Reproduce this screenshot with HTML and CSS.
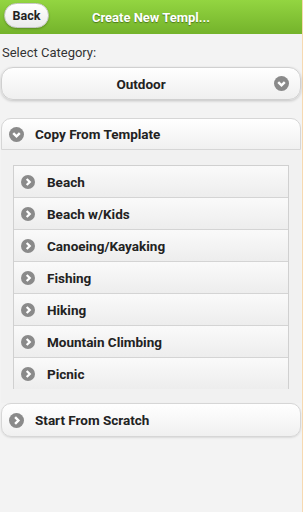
FILE: index.html
```html
<!DOCTYPE html>
<html>
<head>
  <link rel="stylesheet" href="styles.css">
</head>
<body>
  <div class="app">
    <div class="header">
      <button class="back-btn">Back</button>
      <h1>Create New Templ...</h1>
    </div>
    <div class="content">
      <label class="field-label">Select Category:</label>
      <div class="select-btn">
        <span>Outdoor</span>
        <svg class="icon icon-right" viewBox="0 0 16 16"><circle cx="8" cy="8" r="8" fill="#8a8a8a"/><path d="M4.5 6.5 L8 10 L11.5 6.5" stroke="#fff" stroke-width="2.6" fill="none"/></svg>
      </div>

      <div class="collapsible open">
        <div class="coll-head">
          <svg class="icon" viewBox="0 0 16 16"><circle cx="8" cy="8" r="8" fill="#8a8a8a"/><path d="M4.5 6.5 L8 10 L11.5 6.5" stroke="#fff" stroke-width="2.6" fill="none"/></svg>
          <span>Copy From Template</span>
        </div>
        <div class="coll-body">
          <ul class="list">
            <li><svg class="icon" viewBox="0 0 16 16"><circle cx="8" cy="8" r="8" fill="#8a8a8a"/><path d="M6.5 4.5 L10 8 L6.5 11.5" stroke="#fff" stroke-width="2.6" fill="none"/></svg>Beach</li>
            <li><svg class="icon" viewBox="0 0 16 16"><circle cx="8" cy="8" r="8" fill="#8a8a8a"/><path d="M6.5 4.5 L10 8 L6.5 11.5" stroke="#fff" stroke-width="2.6" fill="none"/></svg>Beach w/Kids</li>
            <li><svg class="icon" viewBox="0 0 16 16"><circle cx="8" cy="8" r="8" fill="#8a8a8a"/><path d="M6.5 4.5 L10 8 L6.5 11.5" stroke="#fff" stroke-width="2.6" fill="none"/></svg>Canoeing/Kayaking</li>
            <li><svg class="icon" viewBox="0 0 16 16"><circle cx="8" cy="8" r="8" fill="#8a8a8a"/><path d="M6.5 4.5 L10 8 L6.5 11.5" stroke="#fff" stroke-width="2.6" fill="none"/></svg>Fishing</li>
            <li><svg class="icon" viewBox="0 0 16 16"><circle cx="8" cy="8" r="8" fill="#8a8a8a"/><path d="M6.5 4.5 L10 8 L6.5 11.5" stroke="#fff" stroke-width="2.6" fill="none"/></svg>Hiking</li>
            <li><svg class="icon" viewBox="0 0 16 16"><circle cx="8" cy="8" r="8" fill="#8a8a8a"/><path d="M6.5 4.5 L10 8 L6.5 11.5" stroke="#fff" stroke-width="2.6" fill="none"/></svg>Mountain Climbing</li>
            <li><svg class="icon" viewBox="0 0 16 16"><circle cx="8" cy="8" r="8" fill="#8a8a8a"/><path d="M6.5 4.5 L10 8 L6.5 11.5" stroke="#fff" stroke-width="2.6" fill="none"/></svg>Picnic</li>
          </ul>
        </div>
      </div>

      <div class="collapsible closed">
        <div class="coll-head">
          <svg class="icon" viewBox="0 0 16 16"><circle cx="8" cy="8" r="8" fill="#8a8a8a"/><path d="M6.5 4.5 L10 8 L6.5 11.5" stroke="#fff" stroke-width="2.6" fill="none"/></svg>
          <span>Start From Scratch</span>
        </div>
      </div>
    </div>
  </div>
</body>
</html>
```
FILE: styles.css
```css
body {
  margin: 0;
  font-family: Roboto, "Liberation Sans", sans-serif;
  background: #f3f3f3;
}

.app {
  width: 302px;
  min-height: 512px;
  border-right: 1px solid #f7d9b0;
  background: #f3f3f3;
}

.header {
  position: relative;
  height: 34px;
  display: flex;
  align-items: center;
  justify-content: center;
  background: linear-gradient(#93d541, #74b32b);
}

.back-btn {
  position: absolute;
  left: 4px;
  top: 3px;
  width: 45px;
  height: 25px;
  border-radius: 13px;
  border: 1px solid #c8c8c8;
  background: linear-gradient(#ffffff, #ebebeb);
  font-family: Roboto, sans-serif;
  font-size: 12.5px;
  font-weight: bold;
  color: #222;
  padding: 0;
  box-shadow: 0 1px 2px rgba(0,0,0,0.25);
}

.header h1 {
  margin: 0;
  font-size: 13px;
  font-weight: bold;
  color: #fff;
  text-shadow: 0 1px 1px #4c7a1a;
}

.content {
  padding: 11px 1px 0 1px;
}

.field-label {
  display: block;
  font-size: 13px;
  color: #333;
  margin: 0 0 7px 1px;
}

.select-btn {
  position: relative;
  height: 31px;
  padding-right: 20px;
  display: flex;
  align-items: center;
  justify-content: center;
  border: 1px solid #d0d0d0;
  border-radius: 12px;
  background: linear-gradient(#ffffff, #efefef);
  box-shadow: 0 1px 3px rgba(0,0,0,0.2);
  font-size: 13.5px;
  font-weight: bold;
  color: #222;
}

.icon {
  width: 15px;
  height: 15px;
  flex-shrink: 0;
}

.icon-right {
  position: absolute;
  right: 11px;
  top: 8px;
}

.collapsible {
  margin-top: 18px;
}

.coll-head {
  height: 30px;
  display: flex;
  align-items: center;
  gap: 11px;
  padding-left: 7px;
  border: 1px solid #d6d6d6;
  border-radius: 10px 10px 0 0;
  background: linear-gradient(#ffffff, #f0f0f0);
  font-size: 13.5px;
  font-weight: bold;
  color: #222;
}

.closed {
  margin-top: 0;
}

.closed .coll-head {
  height: 32px;
  border-radius: 10px;
  box-shadow: 0 1px 2px rgba(0,0,0,0.1);
}

.coll-body {
  padding: 15px 12px 14px 12px;
  background: #f1f1f1;
}

.list {
  list-style: none;
  margin: 0;
  padding: 0;
  border: 1px solid #d0d0d0;
  border-bottom: none;
}

.list li {
  height: 31px;
  display: flex;
  align-items: center;
  gap: 12px;
  padding-left: 7px;
  border-top: 1px solid #d4d4d4;
  background: linear-gradient(#fafafa, #ededed);
  font-size: 13.5px;
  font-weight: bold;
  color: #222;
}

.list li .icon {
  width: 14px;
  height: 14px;
}

.list li:first-child {
  border-top: none;
}
```
